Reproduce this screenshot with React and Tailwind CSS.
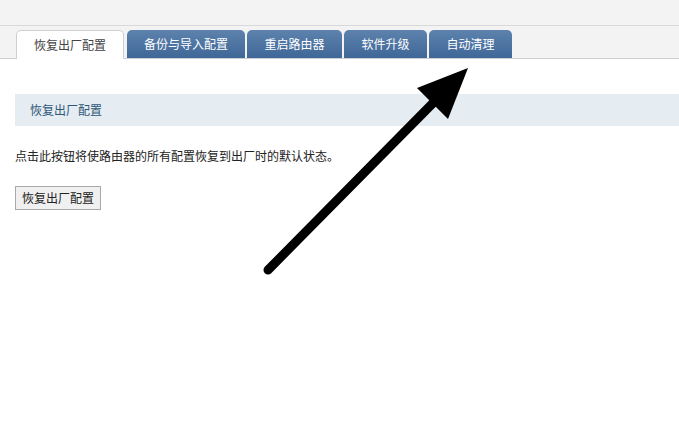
import React from 'react';

const tabs = [
  { label: '恢复出厂配置', w: 'w-[108px]', active: true },
  { label: '备份与导入配置', w: 'w-[118px] ml-[3px]' },
  { label: '重启路由器', w: 'w-[95px] ml-[2px]' },
  { label: '软件升级', w: 'w-[83px] ml-[2px]' },
  { label: '自动清理', w: 'w-[83px] ml-[2px]' },
];

const App = () => {
  return (
    <div
      className="relative w-[679px] h-[422px] bg-white overflow-hidden text-[12px] text-[#333]"
      style={{ fontFamily: '"Noto Sans CJK SC", "Noto Sans", sans-serif' }}
    >
      {/* top strip */}
      <div className="h-[26px] bg-[#f3f3f3] border-b border-[#d8d8d8]"></div>
      <div className="h-[33px] bg-[#f3f3f3] border-b border-[#cfcfcf] flex items-end pl-[16px]">
        {tabs.map((t) =>
          t.active ? (
            <div
              key={t.label}
              className={`${t.w} h-[29px] -mb-px bg-white border border-b-0 border-[#cfcfcf] rounded-t-[5px] flex items-center justify-center text-[#444]`}
            >
              {t.label}
            </div>
          ) : (
            <div
              key={t.label}
              className={`${t.w} h-[28px] bg-gradient-to-b from-[#5d82ad] to-[#3f6797] rounded-t-[5px] flex items-center justify-center text-white`}
            >
              {t.label}
            </div>
          )
        )}
      </div>

      <div className="pl-[15px] pt-[35px]">
        <div className="h-[32px] bg-[#e5ecf2] flex items-center pl-[15px] text-[#2f5877]">
          恢复出厂配置
        </div>
        <p className="mt-[22px] leading-[16px] text-[#222]">点击此按钮将使路由器的所有配置恢复到出厂时的默认状态。</p>
        <button className="mt-[22px] h-[24px] w-[86px] bg-[#f0f0f0] border border-[#a9a9a9] text-[#222] text-[12px]">
          恢复出厂配置
        </button>
      </div>

      {/* annotation arrow */}
      <svg className="absolute left-0 top-0 pointer-events-none" width="679" height="422" viewBox="0 0 679 422">
        <line x1="268" y1="270" x2="436" y2="100" stroke="#000" strokeWidth="9" strokeLinecap="round" />
        <polygon points="468,68 417,88 448,119" fill="#000" />
      </svg>
    </div>
  );
};

export default App;
